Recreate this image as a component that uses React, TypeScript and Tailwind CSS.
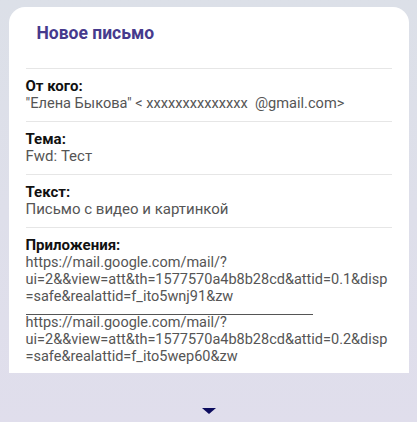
const fields = [
  { label: "От кого:", value: "\"Елена Быкова\" < xxxxxxxxxxxxxx  @gmail.com>", size: "text-[14.6px]" },
  { label: "Тема:", value: "Fwd: Тест", size: "text-[15px]" },
  { label: "Текст:", value: "Письмо с видео и картинкой", size: "text-[15px]" },
];

const attachments = [
  [
    "https://mail.google.com/mail/?",
    "ui=2&&view=att&th=1577570a4b8b28cd&attid=0.1&disp",
    "=safe&realattid=f_ito5wnj91&zw",
  ],
  [
    "https://mail.google.com/mail/?",
    "ui=2&&view=att&th=1577570a4b8b28cd&attid=0.2&disp",
    "=safe&realattid=f_ito5wep60&zw",
  ],
];

export default function App() {
  return (
    <div className="w-[417px] h-[422px] overflow-hidden flex flex-col items-center bg-gradient-to-b from-[#dce0e8] to-[#e0deec] font-['Roboto',sans-serif]">
      {/* Card */}
      <div className="mt-[7px] w-[400px] h-[366px] shrink-0 bg-white rounded-t-2xl px-[17px] overflow-hidden">
        <div className="h-[52px] flex items-end pb-[13px] pl-[11px] text-[17.5px] font-bold text-[#463a8d]">
          Новое письмо
        </div>
        <div className="mt-[9px]" />

        {fields.map((f) => (
          <div key={f.label} className="border-t border-[#e6e6e6] pt-[9px] pb-[9px] text-[15px] leading-[17px]">
            <div className="font-bold text-[#111]">{f.label}</div>
            <div className={`text-[#555] whitespace-pre ${f.size}`}>{f.value}</div>
          </div>
        ))}

        <div className="border-t border-[#e6e6e6] pt-[9px] text-[15px] leading-[17px]">
          <div className="font-bold text-[#111]">Приложения:</div>
          {attachments.map((lines, i) => (
            <div key={i}>
              {i > 0 && <div className="w-[287px] h-[10px] -mb-px border-b border-[#555]" />}
              {lines.map((l) => (
                <div key={l} className="text-[#555] text-[14.5px] whitespace-nowrap">
                  {l}
                </div>
              ))}
            </div>
          ))}
        </div>
      </div>

      {/* Scroll hint */}
      <div className="flex-1 flex items-start justify-center pt-[35px] pl-[1px]">
        <svg width="14" height="6" viewBox="0 0 14 6">
          <path d="M0 0 H14 L7 6 Z" fill="#0c0c5e" />
        </svg>
      </div>
    </div>
  );
}
